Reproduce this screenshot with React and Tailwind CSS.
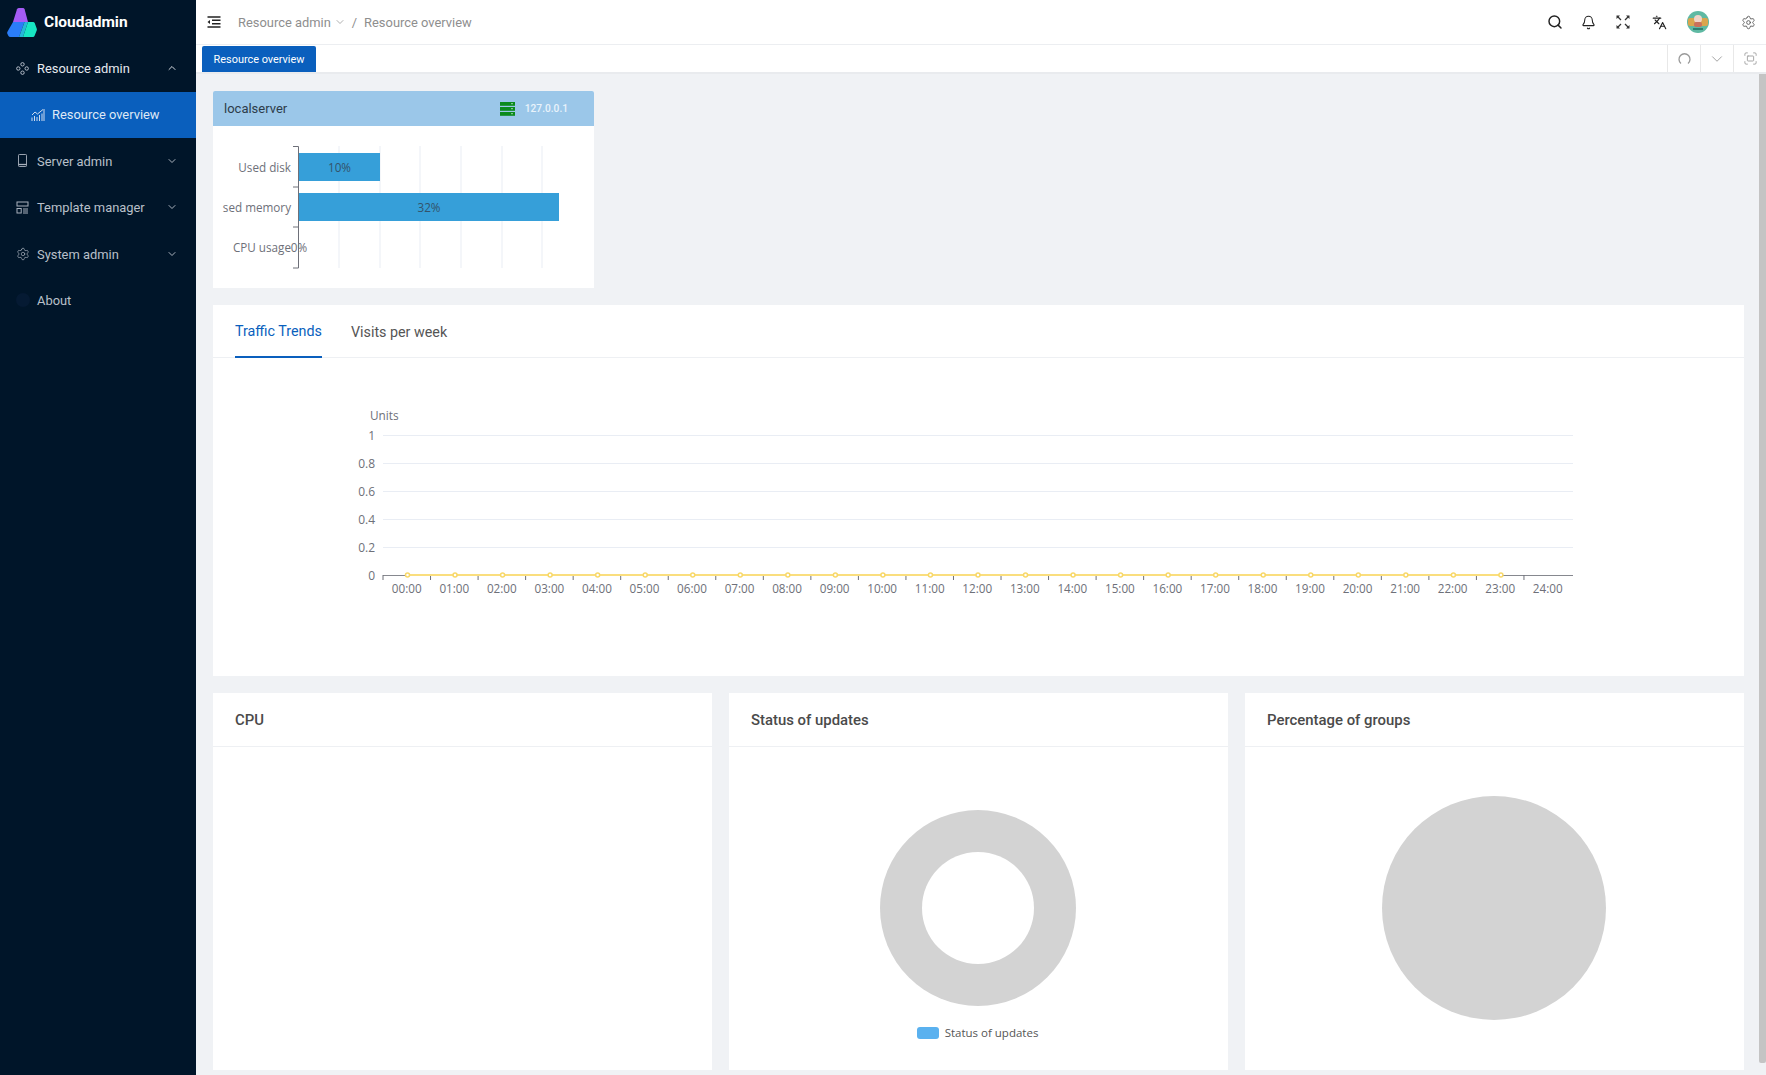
import React from "react";
import { ChevronUp, ChevronDown, Settings, Search, Bell, Languages, Fullscreen } from "lucide-react";

const chartFont = "font-['Open_Sans',sans-serif]";

function Logo() {
  return (
    <svg width="30" height="30" viewBox="0 0 30 30" className="shrink-0">
      <path d="M10 1.200Q10.500 0 12 0h4q1.200 0 1.600 1.200L21 14H6z" fill="#a45cf5" />
      <path d="M6 14h11.500L12 29H3.500Q2 29 1.300 27.800L.3 25.500Q0 24.800 .3 24z" fill="#2a7df8" />
      <path d="M17.500 14H21L16 29h-4z" fill="#25b8d8" />
      <path d="M21 14h5q1.200 0 1.700 1l2 5.500q.4 1 0 2L27.500 28q-.4 1-1.500 1H16z" fill="#17e6c3" />
    </svg>
  );
}

function Glyph({ name }) {
  if (name === "resource")
    return (
      <svg width="13" height="13" viewBox="0 0 13 13" fill="none" stroke="#b4bcc8" strokeWidth="1">
        <circle cx="6.500" cy="2.300" r="1.700" />
        <circle cx="2.300" cy="6.500" r="1.700" />
        <circle cx="10.700" cy="6.500" r="1.700" />
        <circle cx="6.500" cy="10.700" r="1.700" />
      </svg>
    );
  if (name === "template")
    return (
      <svg width="13" height="13" viewBox="0 0 13 13" fill="none" stroke="#a9b1bd" strokeWidth="1">
        <rect x="1" y="1" width="11" height="4" />
        <rect x="1" y="7.500" width="4.200" height="4.500" />
        <path d="M7 8h5M7 10h5M7 12h5" />
      </svg>
    );
  if (name === "server")
    return (
      <svg width="13" height="13" viewBox="0 0 13 13" fill="none" stroke="#a9b1bd">
        <rect x="2.500" y="0.500" width="8" height="12" rx="0.800" strokeWidth="0.900" />
        <path d="M2.500 10.500h8" strokeWidth="1.300" />
      </svg>
    );
  if (name === "system") return <Settings size={14} strokeWidth={1.200} color="#a9b1bd" />;
  return <span className="block h-[14px] w-[14px] rounded-full bg-[#051a33]" />;
}

function MenuRow({ icon, label, arrow, open }) {
  return (
    <div className="flex h-[46.500px] items-center pl-[16px] pr-[18px] text-[12.900px] text-[#b9c0ca]">
      <span className="flex w-[21px] shrink-0">
        <Glyph name={icon} />
      </span>
      <span className={open ? "flex-1 pt-[1px] text-[#e6eaf0]" : "flex-1 pt-[1px]"}>{label}</span>
      {arrow &&
        (open ? (
          <ChevronUp size={12} strokeWidth={2} color="#d5d9e0" />
        ) : (
          <ChevronDown size={12} strokeWidth={2} color="#aab2bd" />
        ))}
    </div>
  );
}

function Sidebar() {
  return (
    <aside className="flex h-full w-[196px] shrink-0 flex-col bg-[#001529]">
      <div className="flex h-[45px] items-center gap-[7px] pl-[7px]">
        <Logo />
        <span className="pt-[1px] text-[15.500px] font-bold text-white">Cloudadmin</span>
      </div>
      <MenuRow icon="resource" label="Resource admin" arrow open />
      <div className="flex h-[46px] items-center gap-[7px] bg-[#0a5fbd] pl-[31px] text-[12.900px] text-[#dfe9f6]">
        <svg width="14" height="14" viewBox="0 0 14 14" fill="none" stroke="#cfdcee" strokeWidth="1">
          <path d="M1 13V9.500M3.500 13V8M6 13V9M8.500 13V7M11 13V5.500M13 13V1" />
          <path d="M1 7l3-3 2.500 2L12 1.500" />
        </svg>
        <span className="pt-[1px]">Resource overview</span>
      </div>
      <MenuRow icon="server" label="Server admin" arrow />
      <MenuRow icon="template" label="Template manager" arrow />
      <MenuRow icon="system" label="System admin" arrow />
      <MenuRow icon="about" label="About" />
    </aside>
  );
}

function ExpandIcon() {
  return (
    <svg width="14" height="14" viewBox="0 0 14 14" stroke="#333" strokeWidth="1.300" fill="#333" className="ml-[20px]">
      <path d="M1.500 1.500 5 5M12.500 1.500 9 5M1.500 12.500 5 9M12.500 12.500 9 9" fill="none" />
      <path d="M0.500 0.500h3.500l-3.500 3.500zM13.500 0.500h-3.500l3.500 3.500zM0.500 13.500h3.500l-3.500-3.500zM13.500 13.500h-3.500l3.500-3.500z" stroke="none" />
    </svg>
  );
}

function Avatar() {
  return (
    <svg width="22" height="22" viewBox="0 0 22 22" className="ml-[20px]">
      <circle cx="11" cy="11" r="11" fill="#5fb9a3" />
      <rect x="1" y="7" width="20" height="8" rx="2" fill="#d9a54e" />
      <circle cx="11" cy="8" r="4" fill="#efd4c8" />
      <rect x="7" y="11" width="8" height="5" rx="2" fill="#c9705c" />
      <rect x="6" y="17" width="10" height="2" fill="#2f7f72" />
    </svg>
  );
}

function TopBar() {
  return (
    <header className="flex h-[45px] shrink-0 items-center border-b border-[#eceef1] bg-white pl-[11px] pr-[10px]">
      <svg width="14" height="12" viewBox="0 0 14 12" stroke="#222" strokeWidth="1.400" fill="#222">
        <path d="M0.500 1h13M5 4.300h8.500M5 7.700h8.500M0.500 11h13" fill="none" />
        <path d="M3 4 0.500 6 3 8z" stroke="none" />
      </svg>
      <div className="ml-[17px] flex items-center pt-[1px] text-[12.900px] text-[#8e8e8e]">
        <span>Resource admin</span>
        <ChevronDown size={12} strokeWidth={1.400} className="ml-[3px]" />
        <span className="ml-[6px] mr-[7px]">/</span>
        <span>Resource overview</span>
      </div>
      <div className="ml-auto flex items-center">
        <Search size={16} strokeWidth={2.200} color="#222" />
        <Bell size={15} strokeWidth={1.700} color="#222" className="ml-[18px]" />
        <ExpandIcon />
        <Languages size={15} strokeWidth={1.800} color="#222" className="ml-[22px]" />
        <Avatar />
        <Settings size={15} strokeWidth={1.400} color="#555" className="ml-[32px]" />
      </div>
    </header>
  );
}

function TabBar() {
  return (
    <div className="flex h-[29px] shrink-0 items-stretch border-b-[2px] border-[#e9ebee] bg-white pl-[6px]">
      <div className="mt-[1px] flex w-[114px] items-center justify-center rounded-t-[2px] bg-[#0a5fbd] pt-[2px] text-[10.900px] text-white">
        Resource overview
      </div>
      <div className="ml-auto flex text-[#9a9a9a]">
        <div className="flex w-[33px] items-center justify-center border-l border-[#e8e8e8]">
          <svg width="13" height="13" viewBox="0 0 13 13" fill="none" stroke="currentColor" strokeWidth="1.300">
            <path d="M3 11.500A5.500 5.500 0 1 1 10 11.500" />
          </svg>
        </div>
        <div className="flex w-[33px] items-center justify-center border-l border-[#e8e8e8]">
          <ChevronDown size={18} strokeWidth={1.200} />
        </div>
        <div className="flex w-[33px] items-center justify-center border-l border-[#e8e8e8]">
          <Fullscreen size={15} strokeWidth={1.400} />
        </div>
      </div>
    </div>
  );
}

const usage = [
  { label: "Used disk", value: "10%", width: 81 },
  { label: "sed memory", value: "32%", width: 260 },
  { label: "CPU usage", value: "0%", width: 0 },
];

function ServerCard() {
  const gridX = [339, 380, 420, 461, 502, 542];
  return (
    <div className="w-[381px] overflow-hidden rounded-t-[2px] bg-white">
      <div className="flex h-[35px] items-center bg-[#9bc7e9] pl-[11px] pr-[26px] text-[13px] text-[#2d3c4a]">
        <span>localserver</span>
        <svg width="15" height="14" viewBox="0 0 15 14" className="ml-auto" fill="#0b8a1c">
          <rect width="15" height="3.800" />
          <rect y="5" width="15" height="3.800" />
          <rect y="10" width="15" height="3.800" />
          <rect x="11" y="1.200" width="2" height="1" fill="#9bd8a5" />
          <rect x="11" y="6.200" width="2" height="1" fill="#9bd8a5" />
          <rect x="11" y="11.200" width="2" height="1" fill="#9bd8a5" />
        </svg>
        <span className="ml-[10px] text-[10.200px] font-medium text-[#e9f3fb]">127.0.0.1</span>
      </div>
      <svg width="381" height="162" viewBox="213 126 381 162" className={`block ${chartFont}`}>
        {gridX.map((x) => (
          <line key={x} x1={x} x2={x} y1="146" y2="268" stroke="#e9edf4" />
        ))}
        <path d="M293 146.500h5.500v121.500H293M293 187h5.500M293 227h5.500" fill="none" stroke="#6e7079" />
        {usage.map((u, i) => (
          <g key={u.label}>
            {u.width > 0 && <rect x="299" y={153 + i * 40} width={u.width} height="28" fill="#369fd9" />}
            <text x="291" y={172 + i * 40} textAnchor="end" fontSize="11.700" fill="#6e7079">
              {u.label}
            </text>
            <text
              x={u.width > 0 ? 299 + u.width / 2 : 299}
              y={172 + i * 40}
              textAnchor="middle"
              fontSize="11.700"
              fill={u.width > 0 ? "#33536b" : "#6e7079"}
            >
              {u.value}
            </text>
          </g>
        ))}
      </svg>
    </div>
  );
}

const hours = Array.from({ length: 25 }, (_, i) => `${String(i).padStart(2, "0")}:00`);

function TrafficChart() {
  const left = 383;
  const step = 47.540;
  const rows = [
    ["1", 435.500],
    ["0.8", 463.500],
    ["0.6", 491.500],
    ["0.4", 519.500],
    ["0.2", 547.500],
  ];
  return (
    <svg width="1531" height="318" viewBox="213 358 1531 318" className={`block ${chartFont}`}>
      <text x="370" y="420" fontSize="11.800" fill="#6e7079">Units</text>
      {rows.map(([t, y]) => (
        <g key={t}>
          <line x1={left} x2="1573" y1={y} y2={y} stroke="#e9edf4" />
          <text x="375" y={y + 4.500} textAnchor="end" fontSize="12" fill="#6e7079">{t}</text>
        </g>
      ))}
      <text x="375" y="580" textAnchor="end" fontSize="12" fill="#6e7079">0</text>
      <line x1={left} x2="1573" y1="575.500" y2="575.500" stroke="#86888f" />
      {hours.map((h, i) => (
        <g key={h}>
          <line x1={left + i * step} x2={left + i * step} y1="575" y2="580" stroke="#6e7079" />
          <text x={left + step / 2 + i * step} y="593" textAnchor="middle" fontSize="11.700" fill="#6e7079">{h}</text>
        </g>
      ))}
      <line x1="407.500" x2={407.500 + 23 * step} y1="575" y2="575" stroke="#fade7e" strokeWidth="2" />
      {hours.slice(0, 24).map((h, i) => (
        <circle key={h} cx={407.500 + i * step} cy="575" r="2" fill="#fff" stroke="#f8d868" strokeWidth="1.500" />
      ))}
    </svg>
  );
}

function TrafficCard() {
  return (
    <div className="mt-[17px] h-[371px] bg-white">
      <div className="flex h-[53px] gap-[29px] border-b border-[#eef0f3] pl-[22px] text-[14.300px]">
        <div className="flex h-[53px] items-center border-b-2 border-[#0a5fbd] pt-[3px] text-[#0a5fbd]">Traffic Trends</div>
        <div className="flex h-[53px] items-center pt-[2px] text-[#555]">Visits per week</div>
      </div>
      <TrafficChart />
    </div>
  );
}

function PanelCard({ title, children }) {
  return (
    <div className="flex min-w-0 flex-col bg-white">
      <div className="flex h-[54px] shrink-0 items-center border-b border-[#eef0f3] pl-[22px] pt-[1px] text-[14.900px] font-medium text-[#4a4a4a]">
        {title}
      </div>
      <div className="flex-1">{children}</div>
    </div>
  );
}

function BottomCards() {
  return (
    <div className="mt-[17px] grid h-[377px] grid-cols-3 gap-[17px]">
      <PanelCard title="CPU" />
      <PanelCard title="Status of updates">
        <div className="flex flex-col items-center pr-[2px] pt-[63px]">
          <div className="flex h-[196px] w-[196px] items-center justify-center rounded-full bg-[#d3d3d3]">
            <div className="h-[112px] w-[112px] rounded-full bg-white" />
          </div>
          <div className={`mt-[19px] flex items-center gap-[6px] text-[11.500px] leading-[16px] text-[#555] ${chartFont}`}>
            <span className="h-[12px] w-[22px] rounded-[3px] bg-[#5ab1ef]" />
            Status of updates
          </div>
        </div>
      </PanelCard>
      <PanelCard title="Percentage of groups">
        <div className="flex justify-center pr-[2px] pt-[49px]">
          <div className="h-[224px] w-[224px] rounded-full bg-[#d3d3d3]" />
        </div>
      </PanelCard>
    </div>
  );
}

export default function App() {
  return (
    <div className="flex h-screen overflow-hidden font-['Roboto',sans-serif]">
      <Sidebar />
      <div className="flex min-w-0 flex-1 flex-col">
        <TopBar />
        <TabBar />
        <div className="flex min-h-0 flex-1 bg-[#f0f2f5]">
          <main className="min-w-0 flex-1 pl-[17px] pr-[15px] pt-[17px]">
            <ServerCard />
            <TrafficCard />
            <BottomCards />
          </main>
          <div className="mb-[12px] w-[7px] shrink-0 rounded-b-[2px] bg-[#c4c4c4]" />
        </div>
      </div>
    </div>
  );
}
